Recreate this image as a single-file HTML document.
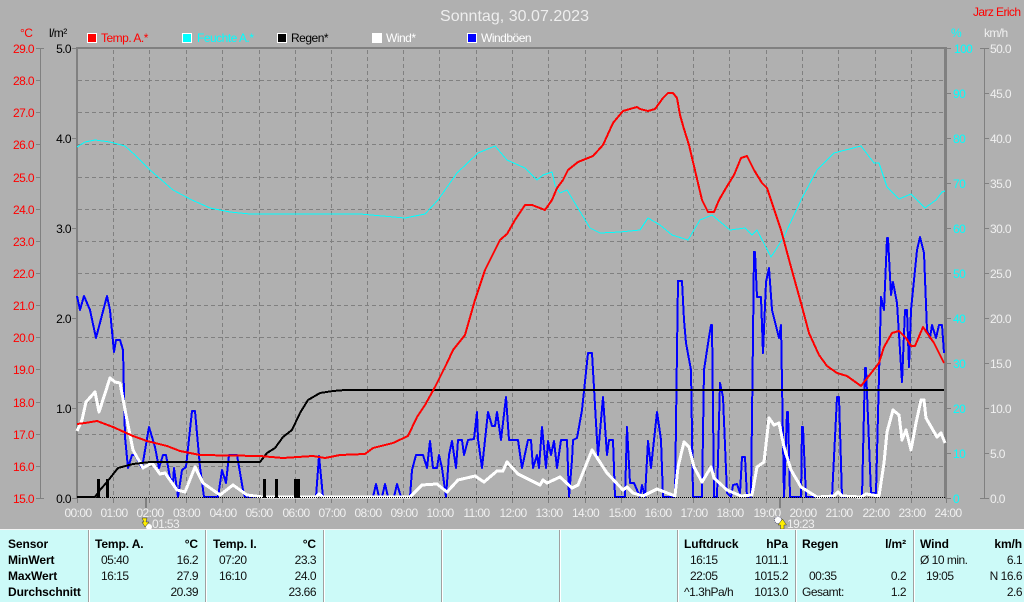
<!DOCTYPE html>
<html><head><meta charset="utf-8"><style>
html,body{margin:0;padding:0;background:#b0b0b0}
svg{display:block;font-family:"Liberation Sans",sans-serif}
.a{font-size:12px;letter-spacing:-.6px}
.b{font-size:12px;font-weight:bold;fill:#000;letter-spacing:-.1px}
.t{font-size:12px;fill:#111;letter-spacing:-.5px}
.g line{stroke:#808080;stroke-width:1;stroke-dasharray:4 3}
.ax line{stroke:#808080;stroke-width:1}
polyline{fill:none;stroke-linejoin:round;shape-rendering:crispEdges}
</style></head><body>
<svg width="1024" height="602" viewBox="0 0 1024 602" xmlns="http://www.w3.org/2000/svg">
<rect width="1024" height="602" fill="#b0b0b0"/>
<text x="514.5" y="21" text-anchor="middle" font-size="16" fill="#eeeeee" textLength="149">Sonntag, 30.07.2023</text>
<text x="973" y="16" font-size="12" fill="#ff0000" textLength="48">Jarz Erich</text>

<!-- legend -->
<g stroke="#fff" stroke-width="1">
<rect x="87.5" y="33.5" width="9" height="9" fill="#f00"/>
<rect x="182.5" y="33.5" width="9" height="9" fill="#0ff"/>
<rect x="277.5" y="33.5" width="9" height="9" fill="#000"/>
<rect x="372.5" y="33.5" width="9" height="9" fill="#fff"/>
<rect x="467.5" y="33.5" width="9" height="9" fill="#00f"/>
</g>
<g font-size="12" letter-spacing="-.5">
<text x="101" y="42" fill="#f00">Temp. A.*</text>
<text x="197" y="42" fill="#0ff">Feuchte A.*</text>
<text x="291" y="42" fill="#000">Regen*</text>
<text x="386" y="42" fill="#fff">Wind*</text>
<text x="481" y="42" fill="#fff">Windböen</text>
</g>

<!-- grid -->
<g class="g" shape-rendering="crispEdges">
<line x1="78" x2="945" y1="80.5" y2="80.5"/><line x1="78" x2="945" y1="112.5" y2="112.5"/><line x1="78" x2="945" y1="144.5" y2="144.5"/><line x1="78" x2="945" y1="177.5" y2="177.5"/><line x1="78" x2="945" y1="209.5" y2="209.5"/><line x1="78" x2="945" y1="241.5" y2="241.5"/><line x1="78" x2="945" y1="273.5" y2="273.5"/><line x1="78" x2="945" y1="305.5" y2="305.5"/><line x1="78" x2="945" y1="337.5" y2="337.5"/><line x1="78" x2="945" y1="369.5" y2="369.5"/><line x1="78" x2="945" y1="402.5" y2="402.5"/><line x1="78" x2="945" y1="434.5" y2="434.5"/><line x1="78" x2="945" y1="466.5" y2="466.5"/>
<line y1="50" y2="498" x1="113.5" x2="113.5"/><line y1="50" y2="498" x1="149.5" x2="149.5"/><line y1="50" y2="498" x1="186.5" x2="186.5"/><line y1="50" y2="498" x1="222.5" x2="222.5"/><line y1="50" y2="498" x1="259.5" x2="259.5"/><line y1="50" y2="498" x1="295.5" x2="295.5"/><line y1="50" y2="498" x1="331.5" x2="331.5"/><line y1="50" y2="498" x1="367.5" x2="367.5"/><line y1="50" y2="498" x1="403.5" x2="403.5"/><line y1="50" y2="498" x1="439.5" x2="439.5"/><line y1="50" y2="498" x1="476.5" x2="476.5"/><line y1="50" y2="498" x1="512.5" x2="512.5"/><line y1="50" y2="498" x1="548.5" x2="548.5"/><line y1="50" y2="498" x1="585.5" x2="585.5"/><line y1="50" y2="498" x1="621.5" x2="621.5"/><line y1="50" y2="498" x1="657.5" x2="657.5"/><line y1="50" y2="498" x1="693.5" x2="693.5"/><line y1="50" y2="498" x1="729.5" x2="729.5"/><line y1="50" y2="498" x1="766.5" x2="766.5"/><line y1="50" y2="498" x1="802.5" x2="802.5"/><line y1="50" y2="498" x1="838.5" x2="838.5"/><line y1="50" y2="498" x1="875.5" x2="875.5"/><line y1="50" y2="498" x1="911.5" x2="911.5"/>
</g>

<!-- axes -->
<g class="ax" shape-rendering="crispEdges">
<rect x="76" y="47" width="2" height="452" fill="#808080"/>
<rect x="76" y="47" width="871" height="2" fill="#808080"/>
<rect x="945" y="47" width="2" height="452" fill="#808080"/>
<line x1="944.5" x2="944.5" y1="48" y2="498"/>
<line x1="40.5" x2="40.5" y1="48" y2="498"/>
<line x1="984.5" x2="984.5" y1="48" y2="498"/>
<line x1="36" x2="44" y1="48.5" y2="48.5"/><line x1="36" x2="40" y1="80.5" y2="80.5"/><line x1="36" x2="40" y1="112.5" y2="112.5"/><line x1="36" x2="40" y1="144.5" y2="144.5"/><line x1="36" x2="40" y1="177.5" y2="177.5"/><line x1="36" x2="40" y1="209.5" y2="209.5"/><line x1="36" x2="40" y1="241.5" y2="241.5"/><line x1="36" x2="40" y1="273.5" y2="273.5"/><line x1="36" x2="40" y1="305.5" y2="305.5"/><line x1="36" x2="40" y1="337.5" y2="337.5"/><line x1="36" x2="40" y1="369.5" y2="369.5"/><line x1="36" x2="40" y1="402.5" y2="402.5"/><line x1="36" x2="40" y1="434.5" y2="434.5"/><line x1="36" x2="40" y1="466.5" y2="466.5"/><line x1="36" x2="44" y1="498.5" y2="498.5"/>
<line x1="72" x2="77" y1="48.5" y2="48.5"/><line x1="72" x2="77" y1="138.5" y2="138.5"/><line x1="72" x2="77" y1="228.5" y2="228.5"/><line x1="72" x2="77" y1="318.5" y2="318.5"/><line x1="72" x2="77" y1="408.5" y2="408.5"/><line x1="72" x2="77" y1="498.5" y2="498.5"/>
<line x1="947" x2="951" y1="48.5" y2="48.5"/><line x1="947" x2="951" y1="93.5" y2="93.5"/><line x1="947" x2="951" y1="138.5" y2="138.5"/><line x1="947" x2="951" y1="183.5" y2="183.5"/><line x1="947" x2="951" y1="228.5" y2="228.5"/><line x1="947" x2="951" y1="273.5" y2="273.5"/><line x1="947" x2="951" y1="318.5" y2="318.5"/><line x1="947" x2="951" y1="363.5" y2="363.5"/><line x1="947" x2="951" y1="408.5" y2="408.5"/><line x1="947" x2="951" y1="453.5" y2="453.5"/><line x1="947" x2="951" y1="498.5" y2="498.5"/>
<line x1="980" x2="989" y1="48.5" y2="48.5"/><line x1="984" x2="989" y1="93.5" y2="93.5"/><line x1="984" x2="989" y1="138.5" y2="138.5"/><line x1="984" x2="989" y1="183.5" y2="183.5"/><line x1="984" x2="989" y1="228.5" y2="228.5"/><line x1="984" x2="989" y1="273.5" y2="273.5"/><line x1="984" x2="989" y1="318.5" y2="318.5"/><line x1="984" x2="989" y1="363.5" y2="363.5"/><line x1="984" x2="989" y1="408.5" y2="408.5"/><line x1="984" x2="989" y1="453.5" y2="453.5"/><line x1="980" x2="989" y1="498.5" y2="498.5"/>
<line x1="77.5" x2="77.5" y1="498" y2="503"/><line x1="113.5" x2="113.5" y1="498" y2="503"/><line x1="149.5" x2="149.5" y1="498" y2="503"/><line x1="186.5" x2="186.5" y1="498" y2="503"/><line x1="222.5" x2="222.5" y1="498" y2="503"/><line x1="259.5" x2="259.5" y1="498" y2="503"/><line x1="295.5" x2="295.5" y1="498" y2="503"/><line x1="331.5" x2="331.5" y1="498" y2="503"/><line x1="367.5" x2="367.5" y1="498" y2="503"/><line x1="403.5" x2="403.5" y1="498" y2="503"/><line x1="439.5" x2="439.5" y1="498" y2="503"/><line x1="476.5" x2="476.5" y1="498" y2="503"/><line x1="512.5" x2="512.5" y1="498" y2="503"/><line x1="548.5" x2="548.5" y1="498" y2="503"/><line x1="585.5" x2="585.5" y1="498" y2="503"/><line x1="621.5" x2="621.5" y1="498" y2="503"/><line x1="657.5" x2="657.5" y1="498" y2="503"/><line x1="693.5" x2="693.5" y1="498" y2="503"/><line x1="729.5" x2="729.5" y1="498" y2="503"/><line x1="766.5" x2="766.5" y1="498" y2="503"/><line x1="802.5" x2="802.5" y1="498" y2="503"/><line x1="838.5" x2="838.5" y1="498" y2="503"/><line x1="875.5" x2="875.5" y1="498" y2="503"/><line x1="911.5" x2="911.5" y1="498" y2="503"/><line x1="946.5" x2="946.5" y1="498" y2="503"/>
<rect x="145" y="498" width="2" height="10" fill="#808080"/><rect x="779" y="498" width="2" height="10" fill="#808080"/>
</g>

<!-- data -->
<polyline stroke="#0000ff" stroke-width="2" points="77,296 80,310 84,296 90,310 96,338 107,296 110,310 114,352 116,340 120,340 123,350 125,437 128,468 132,455 135,455 142,468 149,427 155,447 159,468 163,455 166,455 170,478 173,482 174,468 178,497 182,470 186,467 192,411 195,411 200,467 204,497 218,497 222,470 226,483 229,455 237,455 243,490 245,497 316,497 319,456 323,497 373,497 376,484 379,497 382,497 385,484 388,497 394,497 397,484 401,497 410,497 412,470 416,455 423,455 427,468 430,441 433,468 437,468 439,455 442,468 446,497 449,455 452,441 456,468 458,440 462,440 464,455 468,440 474,439 477,412 478,439 482,468 488,412 492,426 495,426 497,412 501,440 506,397 509,440 518,440 522,468 528,440 531,440 533,468 537,455 539,468 542,427 546,468 548,441 551,455 554,441 557,468 561,440 567,440 569,497 572,460 573,440 577,438 582,410 588,353 592,353 597,440 598,455 603,397 607,455 609,440 613,440 615,497 625,497 627,427 630,483 634,483 640,497 642,485 645,497 648,441 651,468 657,412 661,440 663,497 675,497 677,350 678,281 682,281 684,320 686,343 691,370 693,497 702,497 704,370 709,337 711,325 712,325 714,497 717,497 720,383 723,397 727,493 731,497 733,485 737,484 740,493 742,457 745,457 747,497 751,497 753,337 754,252 755,252 757,297 761,297 763,353 766,282 769,268 772,310 779,338 781,325 782,383 784,497 787,412 788,412 790,497 801,497 802,427 803,427 806,497 832,497 837,397 839,397 842,497 862,497 865,368 866,368 871,493 876,493 881,297 884,310 887,238 888,238 891,295 893,282 897,303 902,382 905,310 907,310 909,367 911,310 917,250 920,237 924,253 927,330 930,338 932,325 936,338 939,325 942,325 944,353"/>
<polyline stroke="#ffffff" stroke-width="3" points="77,431 82,420 86,402 95,392 99,412 110,378 115,382 120,383 127,420 133,450 143,468 152,463 160,474 165,473 177,490 185,492 195,467 203,483 220,495 233,485 247,495 263,497 316,497 319,494 323,497 410,497 422,485 437,484 447,492 458,480 475,476 484,482 497,471 503,471 507,462 518,474 540,485 543,480 547,483 560,477 572,488 578,485 592,450 607,473 623,490 627,487 633,493 643,496 657,489 675,496 678,467 684,442 689,447 694,467 702,482 711,467 714,478 727,490 741,496 752,495 757,467 764,462 769,418 774,425 779,423 784,447 791,470 801,487 817,497 834,496 838,492 842,496 861,497 866,494 879,496 884,463 887,432 893,410 899,415 902,440 906,430 911,450 916,423 921,400 924,400 926,418 937,437 941,433 945,443"/>
<g fill="#000" shape-rendering="crispEdges">
<rect x="97" y="479" width="3" height="19"/><rect x="106" y="479" width="3" height="19"/><rect x="263" y="479" width="3" height="19"/><rect x="275" y="479" width="3" height="19"/><rect x="294" y="479" width="6" height="19"/>
</g>
<line x1="78" x2="945" y1="497.5" y2="497.5" stroke="#000" stroke-width="1" stroke-dasharray="1 1"/>
<polyline stroke="#000" stroke-width="2" points="77,497 95,497 100,490 107,482 118,468 133,464 150,462 260,462 267,453 275,448 283,437 292,430 300,413 308,400 320,393 333,391 345,390 944,390"/>
<polyline stroke="#00ffff" stroke-width="1" points="77,147 85,142 95,140 110,142 125,146 135,155 150,170 173,190 192,200 210,208 230,212 250,214 300,214 360,214 405,218 425,214 438,200 457,173 478,153 495,146 507,160 525,168 537,180 543,175 552,172 555,185 560,193 567,190 573,200 590,228 600,233 620,232 640,230 648,218 660,225 672,235 688,240 700,220 712,215 730,230 745,228 752,235 757,230 771,257 784,237 787,230 801,200 817,170 834,153 861,146 874,163 879,163 887,187 899,199 911,194 917,200 925,208 936,200 942,192 945,191"/>
<polyline stroke="#ff0000" stroke-width="2" points="77,424 85,423 97,421 113,427 133,436 147,441 167,446 180,451 200,455 260,456 283,458 313,456 325,458 340,455 365,454 373,448 393,443 408,436 417,417 425,405 435,387 447,363 453,350 465,335 475,300 485,270 500,240 507,234 515,220 525,205 532,205 545,210 552,200 557,188 563,180 568,170 578,162 593,156 603,145 613,123 623,111 637,107 640,109 648,111 655,109 663,98 668,93 673,93 677,98 680,115 684,129 689,145 702,200 708,212 714,212 719,200 726,188 734,175 741,158 747,156 754,170 762,183 767,188 771,200 781,230 791,267 801,303 809,333 819,355 827,366 837,373 847,376 861,386 879,363 884,347 892,333 899,331 906,338 911,346 915,346 923,327 934,343 944,363"/>

<!-- axis labels -->
<g class="a" fill="#f00" text-anchor="end">
<text x="34" y="53">29.0</text><text x="34" y="85">28.0</text><text x="34" y="117">27.0</text><text x="34" y="149">26.0</text><text x="34" y="182">25.0</text><text x="34" y="214">24.0</text><text x="34" y="246">23.0</text><text x="34" y="278">22.0</text><text x="34" y="310">21.0</text><text x="34" y="342">20.0</text><text x="34" y="374">19.0</text><text x="34" y="407">18.0</text><text x="34" y="439">17.0</text><text x="34" y="471">16.0</text><text x="34" y="503">15.0</text>
</g>
<text x="20" y="37" class="a" fill="#f00">°C</text>
<text x="49" y="37" class="a" fill="#000">l/m²</text>
<g class="a" fill="#000" text-anchor="end">
<text x="71" y="53">5.0</text><text x="71" y="143">4.0</text><text x="71" y="233">3.0</text><text x="71" y="323">2.0</text><text x="71" y="413">1.0</text><text x="71" y="503">0.0</text>
</g>
<g class="a" fill="#00ffff">
<text x="951" y="37">%</text>
<text x="954" y="53">100</text><text x="953" y="98">90</text><text x="953" y="143">80</text><text x="953" y="188">70</text><text x="953" y="233">60</text><text x="953" y="278">50</text><text x="953" y="323">40</text><text x="953" y="368">30</text><text x="953" y="413">20</text><text x="953" y="458">10</text><text x="953" y="503">0</text>
</g>
<g class="a" fill="#f0f0f0">
<text x="984" y="37">km/h</text>
<text x="990" y="53">50.0</text><text x="990" y="98">45.0</text><text x="990" y="143">40.0</text><text x="990" y="188">35.0</text><text x="990" y="233">30.0</text><text x="990" y="278">25.0</text><text x="990" y="323">20.0</text><text x="990" y="368">15.0</text><text x="990" y="413">10.0</text><text x="990" y="458">5.0</text><text x="990" y="503">0.0</text>
</g>
<g class="a" fill="#f0f0f0" text-anchor="middle">
<text x="78" y="517">00:00</text><text x="114" y="517">01:00</text><text x="150" y="517">02:00</text><text x="186.5" y="517">03:00</text><text x="223" y="517">04:00</text><text x="259" y="517">05:00</text><text x="296" y="517">06:00</text><text x="332" y="517">07:00</text><text x="368" y="517">08:00</text><text x="404" y="517">09:00</text><text x="440" y="517">10:00</text><text x="476.5" y="517">11:00</text><text x="513" y="517">12:00</text><text x="549" y="517">13:00</text><text x="585.5" y="517">14:00</text><text x="622" y="517">15:00</text><text x="658" y="517">16:00</text><text x="694" y="517">17:00</text><text x="730" y="517">18:00</text><text x="767" y="517">19:00</text><text x="803" y="517">20:00</text><text x="839" y="517">21:00</text><text x="876" y="517">22:00</text><text x="912" y="517">23:00</text><text x="948" y="517">24:00</text>
</g>
<text x="152" y="528" class="a" fill="#f0f0f0">01:53</text>
<text x="787" y="528" class="a" fill="#f0f0f0">19:23</text>

<!-- sun markers -->
<circle cx="149" cy="527" r="3" fill="#fff"/>
<path d="M142 518h5l-1 4h3l-4 5-3-5h2z" fill="#ffee00" stroke="#333" stroke-width=".5"/>
<circle cx="778" cy="520" r="3.5" fill="#fff" stroke="#225" stroke-width=".6" stroke-dasharray="1 1"/>
<path d="M782.5 519l4 6h-2.5v4h-3.500v-4h-2.500z" fill="#ffee00" stroke="#333" stroke-width=".5"/>

<!-- table -->
<rect x="0" y="529" width="1024" height="1" fill="#f4f4f4"/>
<rect x="0" y="530" width="1024" height="72" fill="#ccfaf8"/>
<g fill="#a0a0a0" shape-rendering="crispEdges">
<rect x="88" y="530" width="1" height="72"/><rect x="205" y="530" width="1" height="72"/><rect x="323" y="530" width="1" height="72"/><rect x="441" y="530" width="1" height="72"/><rect x="559" y="530" width="1" height="72"/><rect x="677" y="530" width="1" height="72"/><rect x="795" y="530" width="1" height="72"/><rect x="913" y="530" width="1" height="72"/>
</g>
<g fill="#fff" shape-rendering="crispEdges">
<rect x="89" y="530" width="1" height="72"/><rect x="206" y="530" width="1" height="72"/><rect x="324" y="530" width="1" height="72"/><rect x="442" y="530" width="1" height="72"/><rect x="560" y="530" width="1" height="72"/><rect x="678" y="530" width="1" height="72"/><rect x="796" y="530" width="1" height="72"/><rect x="914" y="530" width="1" height="72"/>
</g>
<g class="b">
<text x="8" y="548">Sensor</text><text x="8" y="564">MinWert</text><text x="8" y="580">MaxWert</text><text x="8" y="596">Durchschnitt</text>
<text x="95" y="548">Temp. A.</text><text x="198" y="548" text-anchor="end">°C</text>
<text x="213" y="548">Temp. I.</text><text x="316" y="548" text-anchor="end">°C</text>
<text x="684" y="548">Luftdruck</text><text x="788" y="548" text-anchor="end">hPa</text>
<text x="802" y="548">Regen</text><text x="906" y="548" text-anchor="end">l/m²</text>
<text x="920" y="548">Wind</text><text x="1022" y="548" text-anchor="end">km/h</text>
</g>
<g class="t">
<text x="101" y="564">05:40</text><text x="198" y="564" text-anchor="end">16.2</text>
<text x="101" y="580">16:15</text><text x="198" y="580" text-anchor="end">27.9</text>
<text x="198" y="596" text-anchor="end">20.39</text>
<text x="219" y="564">07:20</text><text x="316" y="564" text-anchor="end">23.3</text>
<text x="219" y="580">16:10</text><text x="316" y="580" text-anchor="end">24.0</text>
<text x="316" y="596" text-anchor="end">23.66</text>
<text x="690" y="564">16:15</text><text x="788" y="564" text-anchor="end">1011.1</text>
<text x="690" y="580">22:05</text><text x="788" y="580" text-anchor="end">1015.2</text>
<text x="684" y="596">^1.3hPa/h</text><text x="788" y="596" text-anchor="end">1013.0</text>
<text x="809" y="580">00:35</text><text x="906" y="580" text-anchor="end">0.2</text>
<text x="802" y="596">Gesamt:</text><text x="906" y="596" text-anchor="end">1.2</text>
<text x="920" y="564">Ø 10 min.</text><text x="1022" y="564" text-anchor="end">6.1</text>
<text x="926" y="580">19:05</text><text x="1022" y="580" text-anchor="end">N 16.6</text>
<text x="1022" y="596" text-anchor="end">2.6</text>
</g>
</svg>
</body></html>
